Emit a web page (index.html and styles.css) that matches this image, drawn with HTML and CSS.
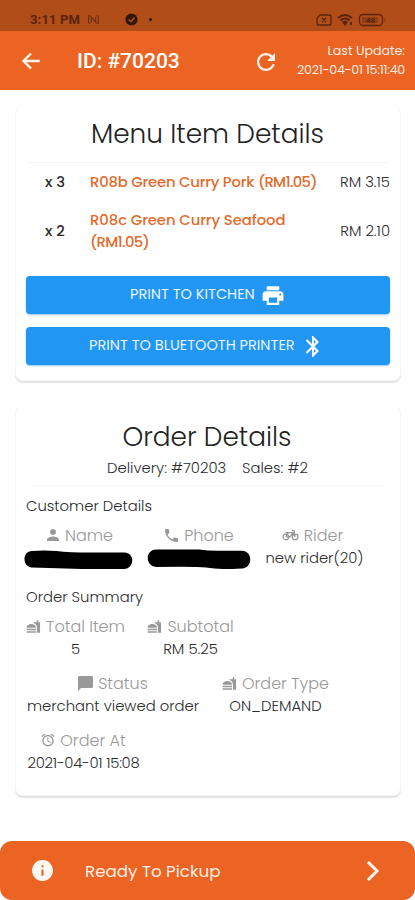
FILE: index.html
```html
<!DOCTYPE html>
<html lang="en">
<head>
<meta charset="utf-8">
<title>Order</title>
<link rel="stylesheet" href="styles.css">
</head>
<body>
<svg width="0" height="0" class="defs">
  <symbol id="meal" viewBox="0 0 24 24"><path d="M1 19.500h15v2.500H1zM1 15.500h15V18H1zM1 14c0-4 3.500-6 7.500-6s7.500 2 7.500 6zM17.500 22h5V5h-3V1.500l-2.500 1V5h-5v1.500c3.500 1 5.500 3.500 5.500 7.500z"/></symbol>
</svg>
<div class="screen">
  <div class="status">
    <span class="clock">3:11 PM</span>
    <svg class="nfc" viewBox="0 0 13 10"><path d="M1 9V1h2M1 9h2M12 1v8h-2M12 1h-2M4 8V2l5 6V2"/></svg>
    <svg class="check" viewBox="0 0 14 14"><circle cx="7" cy="7" r="6.500"/><path d="M4 7l2.300 2.300L10.200 5"/></svg>
    <span class="dot"></span>
    <svg class="sys" viewBox="0 0 70 14">
      <path class="line" d="M4 2h9q2 0 2 2v6q0 2-2 2H3q-2 0-2-2V5zM6 5l4 4M10 5L6 9"/>
      <path class="line wifi" d="M22 5q7-6 14 0M24.500 7.500q4.500-4 9 0"/><path d="M26 9q3-2.500 6 0l-3 4zM34 9h2v3h-2z"/>
      <rect class="line" x="43.500" y="1.500" width="23" height="11" rx="3.500"/><path d="M68 5h1.500v4H68zM46 4h16v6H46z" opacity=".35"/>
      <text x="50" y="10">48</text>
    </svg>
  </div>
  <header class="bar">
    <svg class="back" viewBox="0 0 24 24"><path d="M22.500 12H3M12 3L3 12l9 9"/></svg>
    <h1>ID: #70203</h1>
    <svg class="refresh" viewBox="4 4 16 16"><path d="M17.650 6.350C16.200 4.900 14.210 4 12 4c-4.420 0-7.990 3.580-7.990 8s3.570 8 7.990 8c3.730 0 6.840-2.550 7.730-6h-2.080c-.82 2.330-3.040 4-5.650 4-3.310 0-6-2.690-6-6s2.690-6 6-6c1.660 0 3.140.69 4.220 1.780L13 11h7V4z"/></svg>
    <div class="updated"><span>Last Update:</span><span class="stamp">2021-04-01 15:11:40</span></div>
  </header>

  <section class="card menu">
    <h2 class="menu-title">Menu Item Details</h2>
    <div class="item one"><b>x 3</b><strong>R08b Green Curry Pork <span class="unit">(RM1.05)</span></strong><span class="price">RM 3.15</span></div>
    <div class="item two"><b>x 2</b><strong>R08c Green Curry Seafood<br><span class="unit">(RM1.05)</span></strong><span class="price">RM 2.10</span></div>
    <button class="kitchen"><span>PRINT TO KITCHEN</span><svg viewBox="0 0 24 24"><path d="M19 8H5c-1.660 0-3 1.340-3 3v6h4v4h12v-4h4v-6c0-1.660-1.340-3-3-3zm-3 11H8v-5h8v5zm3-7c-.55 0-1-.45-1-1s.45-1 1-1 1 .45 1 1-.45 1-1 1zm-1-9H6v4h12V3z"/></svg></button>
    <button class="bluetooth"><span>PRINT TO BLUETOOTH PRINTER</span><svg viewBox="0 0 24 24"><path d="M17.710 7.710L12 2h-1v7.590L6.410 5 5 6.410 10.590 12 5 17.590 6.410 19 11 14.410V22h1l5.710-5.710-4.300-4.290 4.300-4.290zM13 5.830l1.880 1.880L13 9.590V5.830zm1.880 10.460L13 18.170v-3.760l1.880 1.880z"/></svg></button>
  </section>

  <section class="card order">
    <h2 class="order-title">Order Details</h2>
    <p class="sub"><span class="delivery">Delivery: #70203</span><span>Sales: #2</span></p>
    <h3 class="customer">Customer Details</h3>
    <div class="fields people">
      <div class="name"><label><svg viewBox="4 4 16 16"><path d="M12 12c2.210 0 4-1.790 4-4s-1.790-4-4-4-4 1.790-4 4 1.790 4 4 4zm0 2c-2.670 0-8 1.340-8 4v2h16v-2c0-2.660-5.330-4-8-4z"/></svg><span>Name</span></label>
        <svg class="redact" viewBox="0 0 109 20"><path d="M8 2Q20 1 32 2Q50 4 75 3.500H100C111 3 111 20 100 20Q80 21 58 20L8 18.500C-2 18-2 2 8 2z"/></svg></div>
      <div class="phone"><label><svg viewBox="3 3 18 18"><path d="M6.620 10.790c1.440 2.830 3.760 5.140 6.590 6.590l2.200-2.200c.27-.27.67-.36 1.020-.24 1.120.37 2.330.57 3.570.57.55 0 1 .45 1 1V20c0 .55-.45 1-1 1-9.390 0-17-7.610-17-17 0-.55.45-1 1-1h3.500c.55 0 1 .45 1 1 0 1.250.2 2.450.57 3.570.11.35.03.74-.25 1.020z"/></svg><span>Phone</span></label>
        <svg class="redact" viewBox="0 0 104 20"><path d="M9 .5H52Q62 2 73 1.800H95C106 2 106 19 95 19.500Q75 21 59 18.500Q50 17.500 9 18C-2 17-2 1 9 .5z"/></svg></div>
      <div class="rider"><label><svg viewBox="0 0 24 18"><path class="bike" d="M9.500 11a4 4 0 1 1-8 0a4 4 0 1 1 8 0M22.500 11a4 4 0 1 1-8 0a4 4 0 1 1 8 0M5.500 11l3-6h7l3 6M5.500 11h6l4-6M14 2h3l1.500 9M5 5h5"/></svg><span>Rider</span></label><span class="value">new rider(20)</span></div>
    </div>
    <h3>Order Summary</h3>
    <div class="fields totals">
      <div class="total"><label><svg><use href="#meal"/></svg><span>Total Item</span></label><span class="value">5</span></div>
      <div class="subtotal"><label><svg><use href="#meal"/></svg><span>Subtotal</span></label><span class="value">RM 5.25</span></div>
    </div>
    <div class="fields">
      <div class="state"><label><svg viewBox="2 2 20 20"><path d="M20 2H4c-1.100 0-2 .9-2 2v18l4-4h14c1.100 0 2-.9 2-2V4c0-1.100-.9-2-2-2z"/></svg><span>Status</span></label><span class="value">merchant viewed order</span></div>
      <div class="type"><label><svg><use href="#meal"/></svg><span>Order Type</span></label><span class="value">ON_DEMAND</span></div>
    </div>
    <div class="fields">
      <div class="at"><label><svg viewBox="1 1 22 22"><path d="M22 5.720l-4.600-3.860-1.290 1.530 4.600 3.860L22 5.720zM7.880 3.390L6.600 1.860 2 5.710l1.290 1.530 4.590-3.850zM12.500 8H11v6l4.750 2.850.75-1.230-4-2.370V8zM12 4c-4.970 0-9 4.030-9 9s4.020 9 9 9c4.970 0 9-4.030 9-9s-4.030-9-9-9zm0 16c-3.870 0-7-3.130-7-7s3.130-7 7-7 7 3.130 7 7-3.130 7-7 7z"/></svg><span>Order At</span></label><span class="value stamp">2021-04-01 15:08</span></div>
    </div>
  </section>

  <footer class="pickup">
    <svg class="info" viewBox="2 2 20 20"><path d="M12 2C6.480 2 2 6.480 2 12s4.480 10 10 10 10-4.480 10-10S17.520 2 12 2zm1 15h-2v-6h2v6zm0-8h-2V7h2v2z"/></svg>
    <span>Ready To Pickup</span>
    <svg class="chev" viewBox="0 0 14 22"><path d="M2 2l9 9-9 9"/></svg>
  </footer>
</div>
</body>
</html>
```
FILE: styles.css
```css
* { box-sizing: border-box; margin: 0; padding: 0; }
body { width: 415px; height: 900px; overflow: hidden; background: #fefefe; color: #2c2c2c; font-family: Poppins, Inter, "Liberation Sans", sans-serif; font-size: 14.8px; font-weight: 300; }
.defs { position: absolute; }
.screen { display: flex; flex-direction: column; height: 900px; }
svg { flex: none; display: block; }
span { white-space: nowrap; }

.status { height: 31px; background: #b04d19; display: flex; align-items: center; padding: 8px 29px 0 30px; color: #5a240b; }
.clock { width: 57px; font: 700 13px/16px Roboto, sans-serif; letter-spacing: .15px; }
.nfc { width: 13px; height: 9px; fill: none; stroke: #6e3013; stroke-width: 1.200; }
.check { width: 13px; height: 13px; margin-left: 25px; fill: #30160b; }
.check path { fill: none; stroke: #b04d19; stroke-width: 1.700; }
.dot { width: 3px; height: 3px; margin-left: 11px; border-radius: 50%; background: #30160b; }
.sys { width: 70px; height: 14px; margin-left: auto; fill: #5a240b; }
.sys .line { fill: none; stroke: #5a240b; stroke-width: 1.300; }
.sys .wifi { stroke-width: 2; }
.sys text { font: 700 8px Roboto, sans-serif; }

.bar { height: 59px; background: #eb6424; display: flex; align-items: center; padding: 0 10px 0 21px; color: #fff; }
.back { width: 20px; height: 20px; fill: none; stroke: #fff4ec; stroke-width: 2.900; }
.bar h1 { width: 180px; margin-left: 36px; font: 500 21px/28px Roboto, sans-serif; white-space: nowrap; }
.refresh { width: 18px; height: 18px; margin-top: 3px; fill: #fff4ec; }
.updated { flex: 1; display: flex; flex-direction: column; align-items: flex-end; font-size: 12.6px; line-height: 19px; font-weight: 400; color: #ffece0; margin-top: -2px; }
.stamp { letter-spacing: -.25px; }

.card { margin: 0 14px 0 15px; background: #fff; border-radius: 8px; border: 1px solid #f5f5f5; border-top-color: #fefefe; box-shadow: 0 2px 1px #e4e4e4; padding: 0 10px; }
.menu { margin-top: 16px; height: 275px; }
.order { margin-top: 24px; height: 391px; }
h2 { font-size: 26.4px; font-weight: 300; line-height: 34px; text-align: center; white-space: nowrap; color: #222; }
.menu-title { height: 56px; padding: 10px 1px 0 0; border-bottom: 1px solid #f5f5f5; }
.item { display: flex; align-items: center; }
.item b { width: 64px; padding-left: 19px; font-weight: 500; }
.item strong { flex: 1; font-weight: 500; color: #e36a2b; line-height: 22px; letter-spacing: -.05px; white-space: nowrap; }
.one strong { letter-spacing: -.18px; }
.item .unit { letter-spacing: -.7px; }
.one { height: 37px; }
.two { height: 61px; }
button { width: 364px; height: 38px; border: 0; border-radius: 4px; background: #2196f3; box-shadow: 0 1px 2px #8fc4ec; color: #e6f4ff; display: flex; align-items: center; font: inherit; font-size: 14.5px; font-weight: 400; }
.kitchen { margin-top: 15px; padding-left: 104px; }
.bluetooth { margin-top: 13px; padding-left: 63px; }
button svg { width: 26px; height: 25px; fill: #fff; }
button span { text-align: left; }
.kitchen span { width: 130px; margin-top: -1px; }
.bluetooth span { width: 211px; margin-top: -1px; }

.order-title { padding: 14px 2px 0 0; height: 49px; }
.sub { height: 31px; padding-left: 81px; display: flex; line-height: 26px; border-bottom: 1px solid #fafafa; }
.delivery { width: 135px; }
h3 { font-size: 14.8px; font-weight: 300; line-height: 22px; white-space: nowrap; }
.customer { margin: 9px 0 7px; }
.fields { display: flex; gap: 22px; height: 57px; }
.people { height: 62px; gap: 14px; margin-left: -2px; }
.totals { margin-top: 7px; }
.fields > div { display: flex; flex-direction: column; align-items: center; }
label { display: flex; align-items: center; justify-content: center; gap: 5px; height: 22px; font-size: 16px; color: #999; white-space: nowrap; }
label svg { width: 15px; height: 15px; fill: #999; }
.value { line-height: 23px; }
.bike { fill: none; stroke: #999; stroke-width: 1.800; }
.name label svg { width: 12px; height: 12px; }
.name label { padding-left: 3px; gap: 6px; }
.phone label { padding-left: 1px; gap: 6px; }
.phone label svg { width: 13px; height: 13px; }
.rider label svg { width: 17px; height: 13px; }
.rider label { margin-left: -4px; }
.at label svg { width: 14px; height: 14px; }
.fields .redact { fill: #000; height: 20px; margin-top: 3px; }
.name .redact, .name { width: 109px; }
.phone .redact, .phone { width: 104px; }
.rider { width: 99px; }
.total { width: 99px; }
.subtotal { width: 87px; }
.state { width: 174px; }
.type { width: 107px; }
.at { width: 115px; }

.pickup { margin-top: auto; height: 59px; border-radius: 12px; background: #eb6424; color: #ffece0; display: flex; align-items: center; padding: 0 35px 0 32px; font-size: 16.7px; font-weight: 400; }
.info { width: 21px; height: 21px; fill: #fff8f3; margin-right: 32px; }
.chev { width: 14px; height: 22px; margin-left: auto; fill: none; stroke: #fff4ec; stroke-width: 3; }
```
